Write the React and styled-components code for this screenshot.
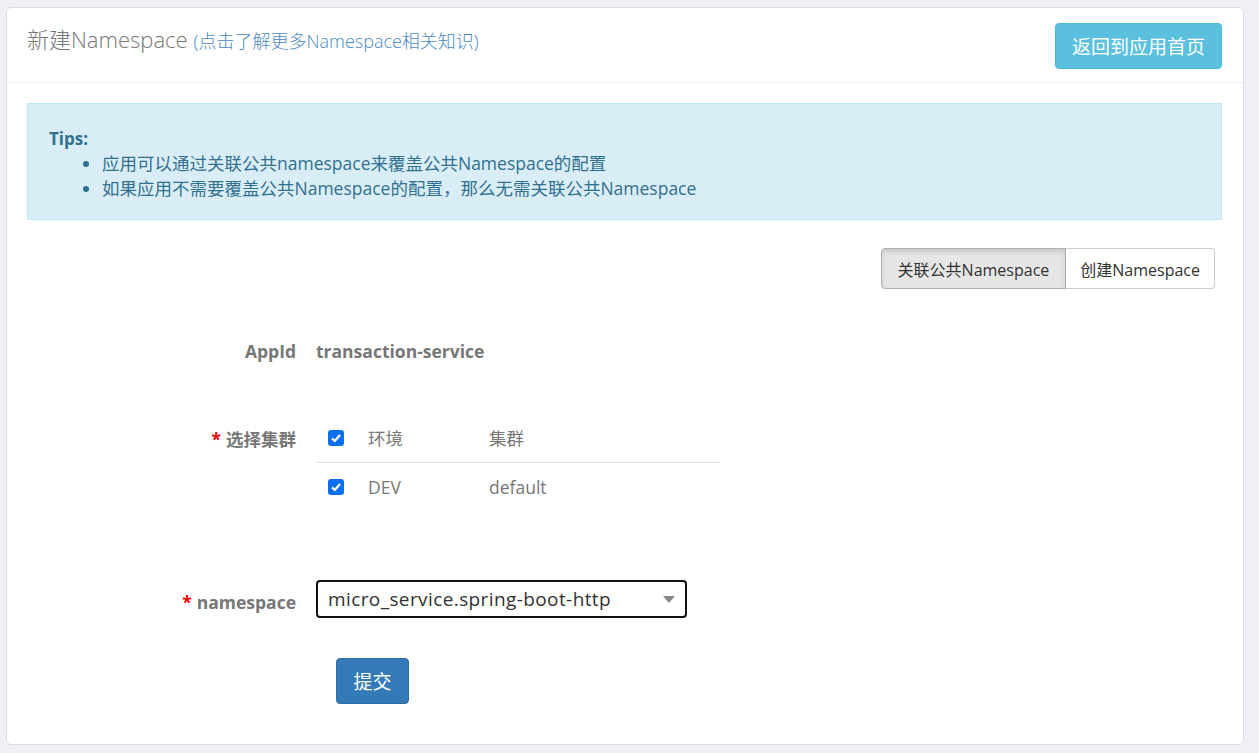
import React from "react";
import styled, { createGlobalStyle } from "styled-components";

const GlobalStyle = createGlobalStyle`
  html, body {
    margin: 0;
    padding: 0;
    background: #eef0f5;
    font-family: "Open Sans", "Noto Sans CJK SC", sans-serif;
  }
`;

const Page = styled.div`
  padding: 7px 15px 8px 6px;
  height: 753px;
  box-sizing: border-box;
`;

const Panel = styled.div`
  background: #fff;
  border: 1px solid #dcdde2;
  border-radius: 5px;
  height: 738px;
  box-sizing: border-box;
`;

const Header = styled.div`
  display: flex;
  justify-content: space-between;
  align-items: flex-start;
  height: 75px;
  box-sizing: border-box;
  padding: 14px 21px 0 20px;
  border-bottom: 1px solid #eceef2;
`;

const Title = styled.div`
  font-size: 22px;
  font-weight: 300;
  color: #777;
  line-height: 34px;
`;

const TitleLink = styled.a`
  font-size: 18px;
  color: #4a8ac4;
  text-decoration: none;
  margin-left: 6px;
`;

const Button = styled.button`
  font-family: inherit;
  border: 1px solid ${(p) => p.$border};
  background: ${(p) => p.$bg};
  color: #fff;
  border-radius: 4px;
  font-size: 19px;
  cursor: pointer;
`;

const BackButton = styled(Button)`
  width: 167px;
  height: 46px;
  margin-top: 1px;
`;

const Body = styled.div`
  padding: 20px 21px 0 20px;
`;

const Alert = styled.div`
  background: #d9edf7;
  border: 1px solid #bce8f1;
  color: #31708f;
  padding: 22px 20px 20px 21px;
  font-size: 17.5px;
  line-height: 25px;
  height: 117px;
  box-sizing: border-box;
`;

const TipsTitle = styled.div`
  font-weight: 700;
  font-size: 17px;
`;

const TipsList = styled.ul`
  margin: 0;
  padding-left: 53px;
`;

const Toolbar = styled.div`
  display: flex;
  justify-content: flex-end;
  padding: 28px 7px 0 0;
`;

const Group = styled.div`
  display: flex;
`;

const GroupButton = styled.button`
  font-family: inherit;
  font-size: 16px;
  height: 41px;
  padding: 0 ${(p) => (p.$active ? "16px" : "14px")};
  color: #333;
  cursor: pointer;
  background: ${(p) => (p.$active ? "#e6e6e6" : "#fff")};
  border: 1px solid ${(p) => (p.$active ? "#adadad" : "#ccc")};
  box-shadow: ${(p) => (p.$active ? "inset 0 3px 5px rgba(0,0,0,.125)" : "none")};
  &:first-child {
    border-radius: 4px 0 0 4px;
  }
  &:last-child {
    border-radius: 0 4px 4px 0;
    border-left: none;
  }
`;

const Form = styled.div`
  display: flex;
  flex-direction: column;
`;

const Row = styled.div`
  display: grid;
  grid-template-columns: 269px 1fr;
  column-gap: 20px;
  align-items: start;
  margin-top: ${(p) => p.$mt};
`;

const Label = styled.div`
  text-align: right;
  font-weight: 700;
  font-size: 17.5px;
  color: #777;
  line-height: 26px;
`;

const Star = styled.span`
  color: #e00;
  margin-right: 5px;
`;

const Value = styled.div`
  font-weight: 700;
  font-size: 17.5px;
  color: #777;
  line-height: 26px;
`;

const Table = styled.div`
  width: 404px;
  margin-top: -13px;
`;

const TRow = styled.div`
  display: grid;
  grid-template-columns: 40px 121px 1fr;
  align-items: center;
  height: ${(p) => p.$h || "48px"};
  border-bottom: ${(p) => (p.$line ? "1px solid #ddd" : "none")};
  padding-left: 12px;
  font-size: 17.5px;
  color: #777;
`;

const Check = styled.span`
  width: 16px;
  height: 16px;
  border-radius: 3px;
  background: #0b6ff0;
  display: flex;
  align-items: center;
  justify-content: center;
`;

const Select = styled.div`
  width: 371px;
  height: 38px;
  box-sizing: border-box;
  border: 2px solid #111;
  border-radius: 4px;
  display: flex;
  align-items: center;
  justify-content: space-between;
  padding: 0 10px;
  font-size: 19px;
  letter-spacing: 0.4px;
  color: #333;
  margin-top: -9px;
`;

const Caret = styled.span`
  width: 0;
  height: 0;
  border-left: 6px solid transparent;
  border-right: 6px solid transparent;
  border-top: 7px solid #888;
`;

const SubmitWrap = styled.div`
  padding-left: 309px;
  margin-top: 40px;
`;

const SubmitButton = styled(Button)`
  width: 73px;
  height: 46px;
`;

const CheckBox = () => (
  <Check>
    <svg width="12" height="12" viewBox="0 0 12 12">
      <path d="M2 6.4 L4.8 9 L10 3" fill="none" stroke="#fff" strokeWidth="2.2" />
    </svg>
  </Check>
);

export default function App() {
  return (
    <>
      <GlobalStyle />
      <Page>
        <Panel>
          <Header>
            <Title>
              新建Namespace
              <TitleLink href="#">(点击了解更多Namespace相关知识)</TitleLink>
            </Title>
            <BackButton $bg="#5bc0de" $border="#46b8da">
              返回到应用首页
            </BackButton>
          </Header>
          <Body>
            <Alert>
              <TipsTitle>Tips:</TipsTitle>
              <TipsList>
                <li>应用可以通过关联公共namespace来覆盖公共Namespace的配置</li>
                <li>如果应用不需要覆盖公共Namespace的配置，那么无需关联公共Namespace</li>
              </TipsList>
            </Alert>
            <Toolbar>
              <Group>
                <GroupButton $active>关联公共Namespace</GroupButton>
                <GroupButton>创建Namespace</GroupButton>
              </Group>
            </Toolbar>
            <Form>
              <Row $mt="49px">
                <Label>AppId</Label>
                <Value>transaction-service</Value>
              </Row>
              <Row $mt="62px">
                <Label>
                  <Star>*</Star>选择集群
                </Label>
                <Table>
                  <TRow $line $h="49px">
                    <CheckBox />
                    <span>环境</span>
                    <span>集群</span>
                  </TRow>
                  <TRow>
                    <CheckBox />
                    <span>DEV</span>
                    <span>default</span>
                  </TRow>
                </Table>
              </Row>
              <Row $mt="78px">
                <Label>
                  <Star>*</Star>namespace
                </Label>
                <Select>
                  <span>micro_service.spring-boot-http</span>
                  <Caret />
                </Select>
              </Row>
              <SubmitWrap>
                <SubmitButton $bg="#337ab7" $border="#2e6da4">
                  提交
                </SubmitButton>
              </SubmitWrap>
            </Form>
          </Body>
        </Panel>
      </Page>
    </>
  );
}
